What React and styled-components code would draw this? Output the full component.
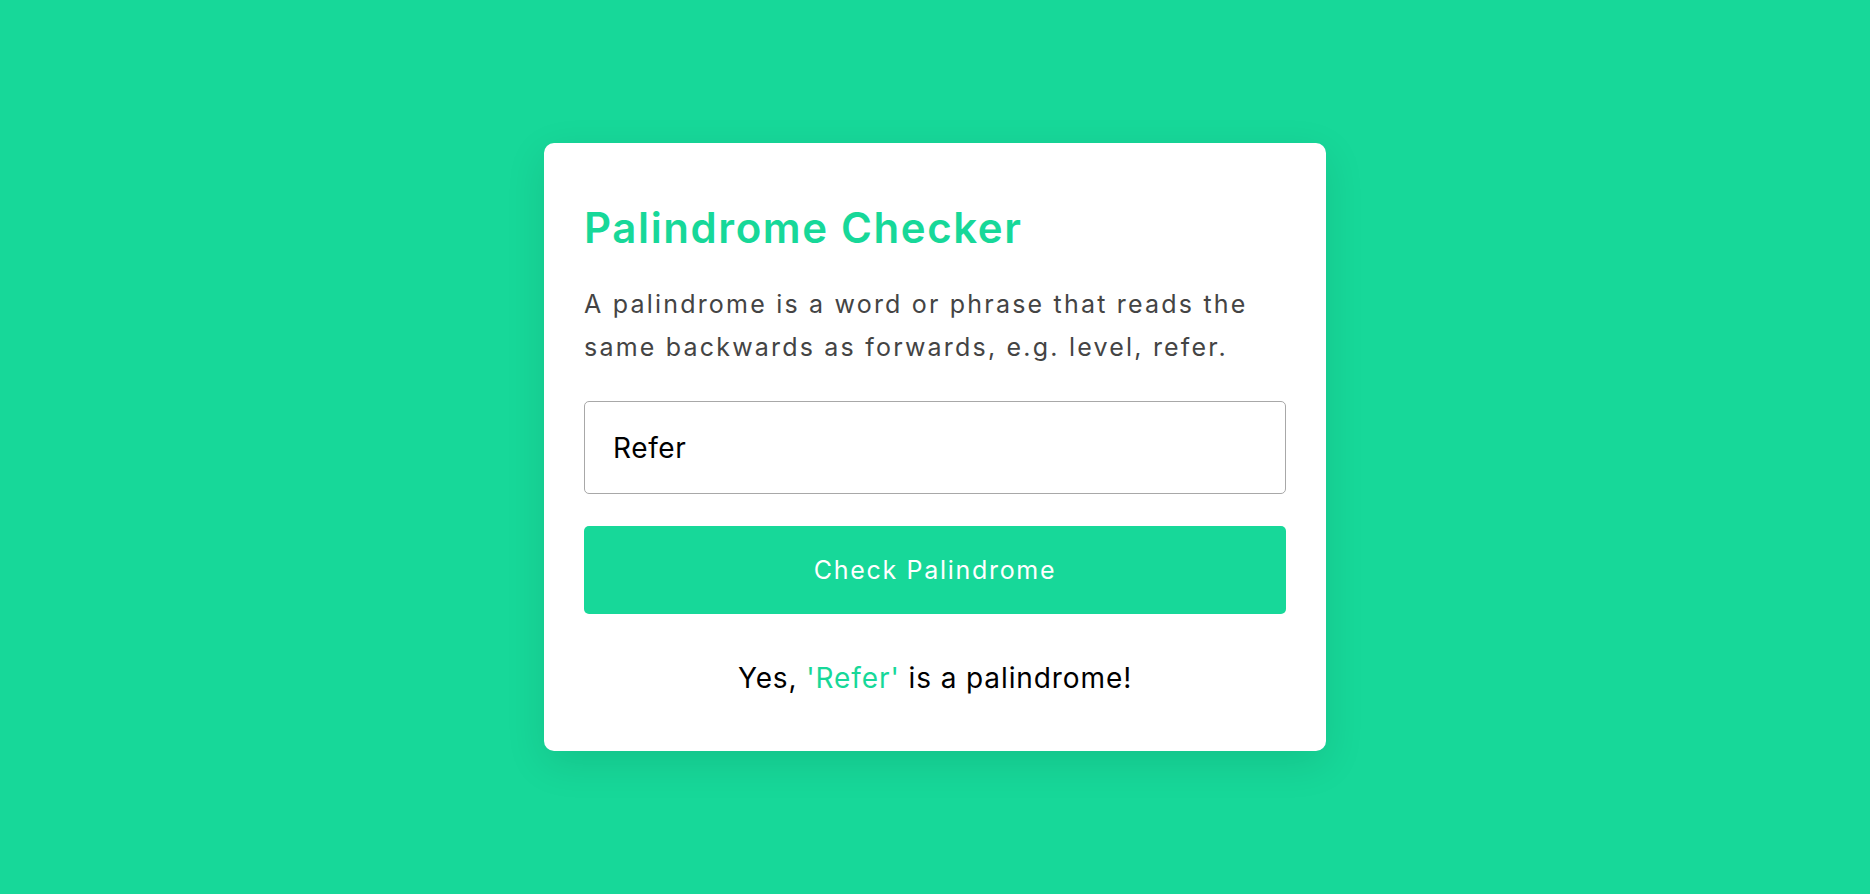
import React, { useState } from "react";
import styled, { createGlobalStyle } from "styled-components";

const GlobalStyle = createGlobalStyle`
  * {
    box-sizing: border-box;
  }
  body {
    margin: 0;
    background-color: #17d899;
    font-family: "Inter", "Liberation Sans", sans-serif;
  }
`;

const Page = styled.div`
  min-height: 100vh;
  display: flex;
  align-items: center;
  justify-content: center;
`;

const Card = styled.div`
  width: 782px;
  background: #ffffff;
  border-radius: 10px;
  padding: 60px 40px 53px;
  box-shadow: 0 12px 40px rgba(0, 0, 0, 0.1);
  display: flex;
  flex-direction: column;
`;

const Title = styled.h1`
  margin: 0;
  color: #17d899;
  font-weight: 600;
  font-size: 42px;
  line-height: 50px;
  letter-spacing: 1.6px;
`;

const Description = styled.p`
  margin: 30px 0 0;
  color: #444444;
  font-size: 25px;
  line-height: 43px;
  letter-spacing: 2.2px;
`;

const TextInput = styled.input`
  margin-top: 32px;
  height: 93px;
  width: 100%;
  padding: 0 28px;
  border: 1px solid #a8a8a8;
  border-radius: 5px;
  font-family: inherit;
  font-size: 28px;
  letter-spacing: 0.6px;
  color: #000000;
  outline: none;
`;

const CheckButton = styled.button`
  margin-top: 32px;
  height: 88px;
  width: 100%;
  border: none;
  border-radius: 5px;
  background-color: #17d899;
  color: #ffffff;
  font-family: inherit;
  font-size: 25px;
  letter-spacing: 1.7px;
  cursor: pointer;
`;

const Result = styled.p`
  margin: 44px 0 0;
  text-align: center;
  color: #000000;
  font-size: 28px;
  line-height: 40px;
  letter-spacing: 0.9px;
`;

const Word = styled.span`
  color: #17d899;
`;

const isPalindrome = (text) => {
  const clean = text.toLowerCase().replace(/[^a-z0-9]/g, "");
  return clean.length > 0 && clean === clean.split("").reverse().join("");
};

const App = () => {
  const [value, setValue] = useState("Refer");
  const [checked, setChecked] = useState("Refer");

  return (
    <Page>
      <GlobalStyle />
      <Card>
        <Title>Palindrome Checker</Title>
        <Description>
          A palindrome is a word or phrase that reads the same backwards as
          forwards, e.g. level, refer.
        </Description>
        <TextInput value={value} onChange={(e) => setValue(e.target.value)} />
        <CheckButton onClick={() => setChecked(value)}>Check Palindrome</CheckButton>
        {checked && (
          <Result>
            {isPalindrome(checked) ? "Yes, " : "No, "}
            <Word>'{checked}'</Word>
            {isPalindrome(checked) ? " is a palindrome!" : " is not a palindrome."}
          </Result>
        )}
      </Card>
    </Page>
  );
};

export default App;
